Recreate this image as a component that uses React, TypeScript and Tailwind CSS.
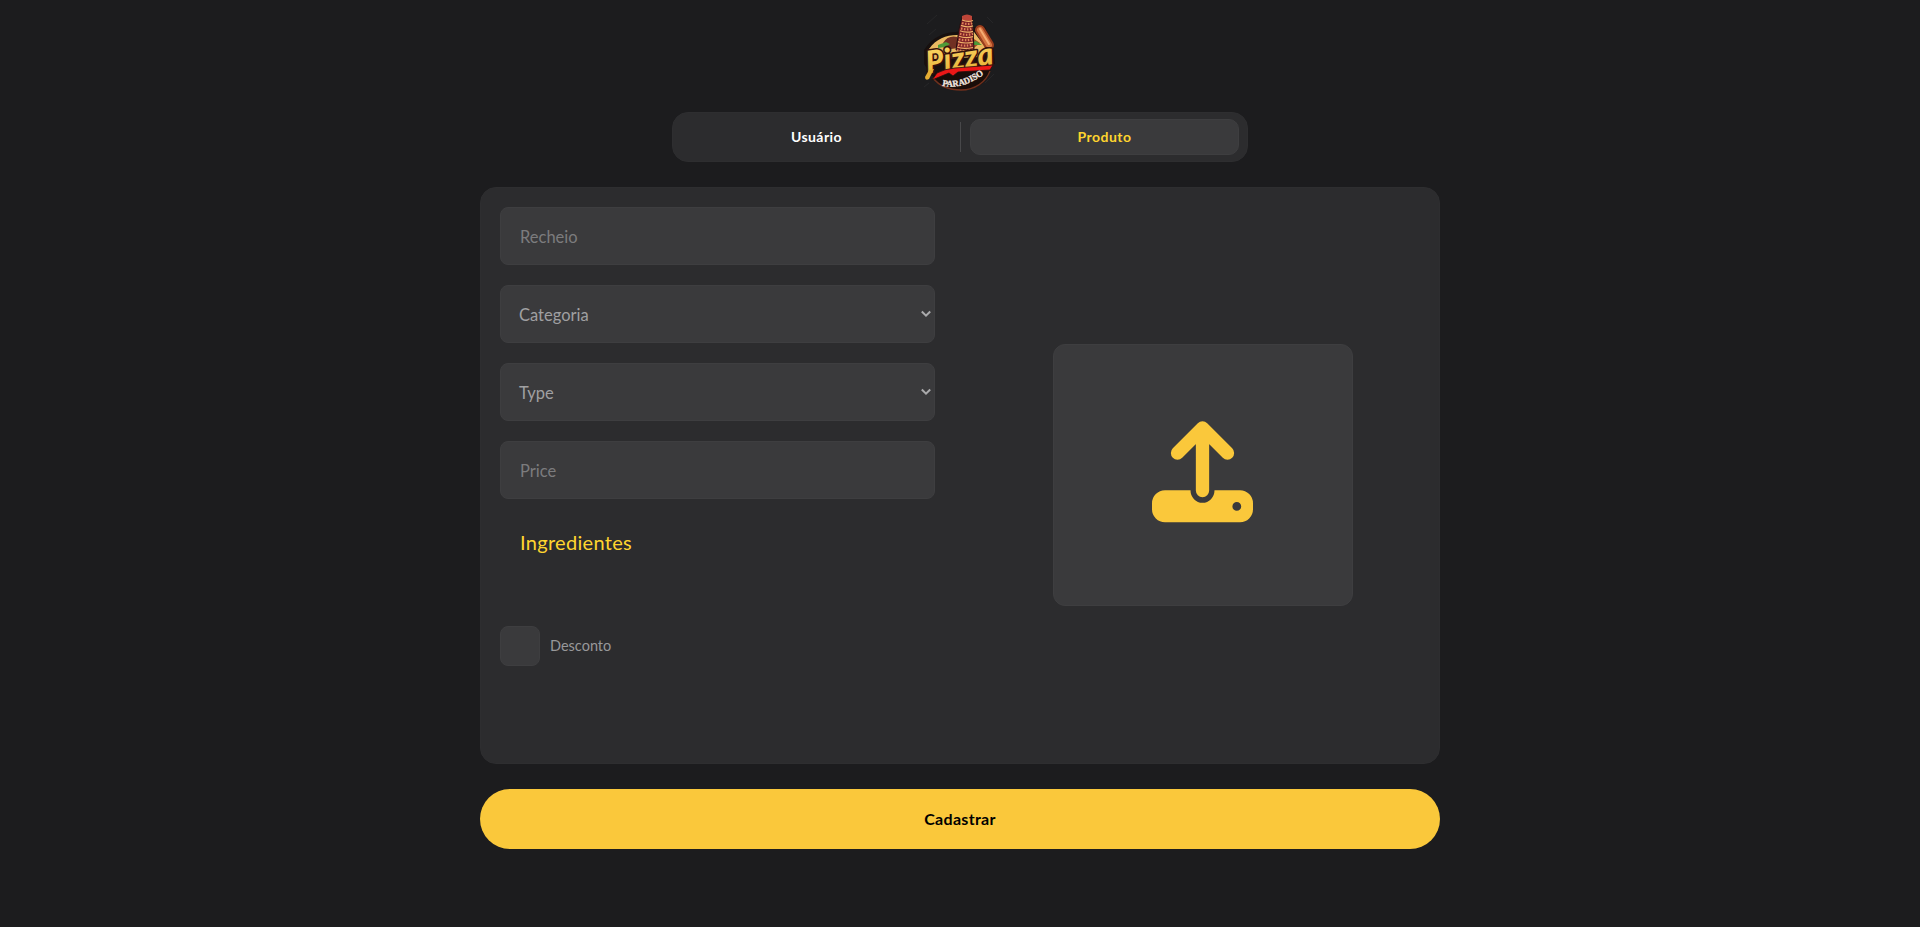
import React from "react";

const field =
  "h-[58px] w-full rounded-lg border border-[#3e3e40] bg-[#3a3a3c] text-[16.5px] outline-none";

function Logo() {
  const tiers = [0, 1, 2, 3, 4, 5];
  return (
    <svg className="h-20 w-20" viewBox="0 0 80 80" role="img" aria-label="Pizza Paradiso">
      <defs>
        <linearGradient id="cheese" x1="0" y1="0" x2="0" y2="1">
          <stop offset="0" stopColor="#ffdc69" />
          <stop offset="1" stopColor="#e5ad33" />
        </linearGradient>
      </defs>
      <g fill="none" stroke="#2b2b2d" strokeWidth="0.7">
        <path d="M7 12L17 3M9 23L16 17M65 71L74 62M4 75L9 71M67 5L73 11" />
      </g>
      <path d="M9 57C14 70 26 78 41 78C57 78 69 70 71 55L60 52L20 60Z" fill="#1a0d09" />
      <path d="M13 66C20 75 30 78 41 78C55 78 66 70 70 59" fill="none" stroke="#72301c" strokeWidth="1.3" />
      <path d="M4 38C12 25 25 20 36 20L56 15Q60 11 65 15L73 32L75 52L12 64L4 52Z" fill="#17100f" />
      <path d="M9 37C16 27 26 23 37 23L54 20L66 36L60 45L14 47Z" fill="#ebba62" />
      <path d="M23 31Q28 23 37 25L38 36L24 38Z" fill="#713023" />
      <path d="M51 25L60 31L54 36Z" fill="#a64a26" />
      <path d="M18 33l8-3 4 2-5 3-7 1zM49 31l7-2 6 4-8 0z" fill="#4e9a38" />
      <path d="M60 18L69 33" fill="none" stroke="#9a3d1e" strokeWidth="10" strokeLinecap="round" />
      <path d="M60 18L69 33" fill="none" stroke="#d47340" strokeWidth="6" strokeLinecap="round" />
      <path d="M60 17L69 32" fill="none" stroke="#f5ac73" strokeWidth="2" strokeLinecap="round" />
      <path d="M42 5L52 5L53 17L54 38L36 38L39 17Z" fill="#7d2027" stroke="#22100f" strokeWidth="1" />
      <path d="M42 4Q47 1 52 4L52 9L42 8Z" fill="#bd4538" />
      {tiers.map((t) => (
        <g key={t}>
          <path
            d={`M${42 - t} ${8 + t * 5.4}q6 2.5 ${11 + t} .5`}
            fill="none" stroke="#f0b36a" strokeWidth="1.2"
          />
          <path
            d={`M${42 - t} ${11 + t * 5.4}q6 2 ${11 + t} 0`}
            fill="none" stroke="#e08558" strokeWidth="2.2" strokeDasharray="1.5 1.5"
          />
        </g>
      ))}
      <text
        x="6" y="57" textLength="68" lengthAdjust="spacingAndGlyphs" transform="rotate(-8 39 50)"
        className="font-['Lato',sans-serif] text-[31px] font-black italic"
        fill="url(#cheese)" stroke="#35110b" strokeWidth="3.2" strokeLinejoin="round" paintOrder="stroke"
      >Pizza</text>
      <path d="M9 58L14 57L9 67Q5 69 5 65Z" fill="#e5ad33" />
      <path d="M17 61Q24 57 35 56L73 53L70 58L38 60L33 64L29 61L12 68Z" fill="#ed1717" stroke="#26100d" strokeWidth=".8" />
      <path id="seal" d="M20 73Q42 80 68 59" fill="none" />
      <text className="font-['Liberation_Serif',serif] text-[9px] font-bold" fill="#f4e8e0" stroke="#f4e8e0" strokeWidth=".3">
        <textPath href="#seal" startOffset="2" textLength="45" lengthAdjust="spacingAndGlyphs">PARADISO</textPath>
      </text>
    </svg>
  );
}

function Select({ label }: { label: string }) {
  return (
    <button type="button" className={`${field} flex items-center justify-between pr-[3px] pl-[18px] text-left text-[#a0a0a2]`}>
      <span className="pt-0.5">{label}</span>
      <svg className="h-[10px] w-[10px]" viewBox="0 0 10 10" fill="none" stroke="#aaaaac" strokeWidth="2">
        <path d="M.8 2.5L5 6.7L9.2 2.5" />
      </svg>
    </button>
  );
}

function UploadIcon() {
  return (
    <svg className="h-[102px] w-[102px]" viewBox="0 0 102 102" fill="#fac83b">
      <path d="M50.5 7V69.5M25.5 32L50.5 7L75.5 32" fill="none" stroke="#fac83b" strokeWidth="13.3" strokeLinecap="round" strokeLinejoin="round" />
      <path
        fillRule="evenodd"
        d="M13 69.3H38.5A12 12.5 0 0 0 62.5 69.3H88A13 13 0 0 1 101 82.3V88.3A13 13 0 0 1 88 101.3H13A13 13 0 0 1 0 88.3V82.3A13 13 0 0 1 13 69.3ZM84.8 81A4.4 4.4 0 1 0 84.8 89.8A4.4 4.4 0 1 0 84.8 81Z"
      />
    </svg>
  );
}

export default function App() {
  return (
    <main className="flex h-[927px] flex-col items-center bg-[#1c1c1e] pt-3 font-['Lato','Noto_Sans',sans-serif]">
      <Logo />
      <nav className="mt-5 flex h-[50px] w-[576px] shrink-0 items-center rounded-2xl border border-[#2e2e30] bg-[#2c2c2e] text-sm font-bold tracking-[0.45px]">
        <button type="button" className="h-9 w-[287px] text-white">Usuário</button>
        <span className="h-[30px] w-px bg-[#48484a]" />
        <button type="button" className="ml-[9px] h-9 w-[269px] rounded-[10px] border border-[#3e3e40] bg-[#3a3a3c] text-[#ffd52e]">Produto</button>
      </nav>
      <form className="mt-[25px] flex h-[577px] w-[960px] shrink-0 rounded-2xl border border-[#2e2e30] bg-[#2c2c2e] px-[19px] pt-[19px]">
        <div className="flex w-[435px] flex-col">
          <div className="flex flex-col gap-5">
            <input className={`${field} px-[19px] pt-0.5 placeholder:text-[#7c7c7e]`} placeholder="Recheio" />
            <Select label="Categoria" />
            <Select label="Type" />
            <input className={`${field} px-[19px] pt-0.5 placeholder:text-[#7c7c7e]`} placeholder="Price" />
          </div>
          <h2 className="mt-[29px] ml-[20px] text-[20px] leading-7 tracking-[0.3px] text-[#ffd52e]">Ingredientes</h2>
          <label className="mt-[70px] flex items-center gap-[10px] text-[14.5px] text-[#98989a]">
            <span className="h-10 w-10 rounded-lg border border-[#3e3e40] bg-[#3a3a3c]" />
            Desconto
          </label>
        </div>
        <button type="button" aria-label="Upload" className="mt-[137px] ml-[118px] flex h-[262px] w-[300px] items-center justify-center rounded-xl border border-[#3e3e40] bg-[#3a3a3c] pb-[7px]">
          <UploadIcon />
        </button>
      </form>
      <button type="button" className="mt-[25px] h-[60px] w-[960px] shrink-0 rounded-[30px] bg-[#fac83b] text-base font-bold tracking-[0.3px] text-black">Cadastrar</button>
    </main>
  );
}
